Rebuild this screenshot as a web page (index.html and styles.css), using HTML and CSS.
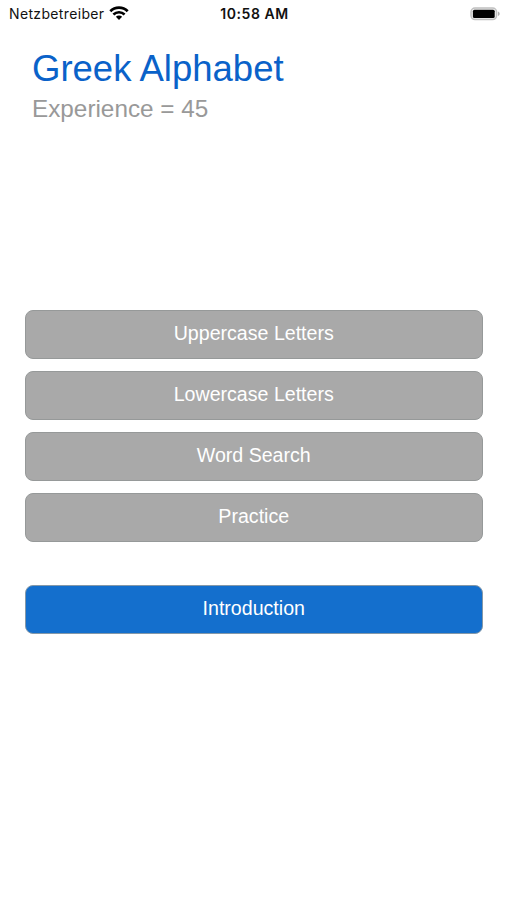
FILE: index.html
```html
<!DOCTYPE html>
<html lang="en">
<head>
    <meta charset="UTF-8">
    <meta name="viewport" content="width=device-width, initial-scale=1.0">
    <title>Greek Alphabet</title>
    <link rel="stylesheet" href="styles.css">
</head>
<body>

    <div class="status-bar">
        <div class="carrier">
            <span>Netzbetreiber</span>
            <svg class="wifi" width="20" height="14" viewBox="0 0 20 14">
                <path d="M1.3 5.3a12.3 12.3 0 0 1 17.4 0" fill="none" stroke="#000" stroke-width="2.7"/>
                <path d="M4.4 8.5a7.9 7.9 0 0 1 11.2 0" fill="none" stroke="#000" stroke-width="2.5"/>
                <path d="M10 14L6.9 10.8a4.4 4.4 0 0 1 6.2 0z" fill="#000"/>
            </svg>
        </div>
        <div class="time">10:58 AM</div>
        <svg class="battery" width="30" height="14" viewBox="0 0 30 14">
            <rect x="1" y="1" width="25.6" height="11.6" rx="4" fill="#eee" stroke="#c0c0c0" stroke-width="1.5"/>
            <rect x="2.9" y="2.8" width="21.8" height="8.2" rx="1.5" fill="#000"/>
            <path d="M28 4.6c2.2.8 2.2 3.6 0 4.4z" fill="#b0b0b0"/>
        </svg>
    </div>

    <div class="header">
        <h1>Greek Alphabet</h1>
        <p class="experience">Experience = 45</p>
    </div>

    <div class="menu">
        <button class="menu-button">Uppercase Letters</button>
        <button class="menu-button">Lowercase Letters</button>
        <button class="menu-button">Word Search</button>
        <button class="menu-button">Practice</button>
        <button class="menu-button intro">Introduction</button>
    </div>

</body>
</html>
```

FILE: styles.css
```css
* {
    box-sizing: border-box;
}
body {
    font-family: "Liberation Sans", Helvetica, Arial, sans-serif;
    background-color: #fff;
    margin: 0;
    min-height: 100vh;
}
.status-bar {
    display: grid;
    grid-template-columns: 1fr auto 1fr;
    align-items: center;
    height: 27px;
    padding: 0 7px 0 9px;
    font-family: Inter, sans-serif;
    font-size: 14px;
    color: #111;
}
.carrier {
    display: flex;
    align-items: center;
    gap: 5px;
    letter-spacing: 0.35px;
}
.wifi {
    margin-top: -2px;
}
.time {
    font-weight: 600;
    letter-spacing: 0.55px;
}
.battery {
    justify-self: end;
}
.header {
    height: 283px;
    padding: 21px 32px 0;
}
h1 {
    margin: 0;
    font-size: 36.5px;
    font-weight: normal;
    line-height: 42px;
    color: #0a62c9;
}
.experience {
    margin: 5px 0 0;
    font-size: 24.3px;
    line-height: 28px;
    color: #999;
}
.menu {
    display: flex;
    flex-direction: column;
    gap: 12px;
    padding: 0 24.5px 0 25px;
}
.menu-button {
    height: 49px;
    padding: 0 0 3px;
    border: 1px solid #969999;
    border-radius: 8px;
    background-color: #a9a9a9;
    color: #fff;
    font-family: inherit;
    font-size: 19.6px;
}
.intro {
    margin-top: 31px;
    padding-bottom: 2px;
    background-color: #146fcd;
    border-color: #8498a8;
}
```
